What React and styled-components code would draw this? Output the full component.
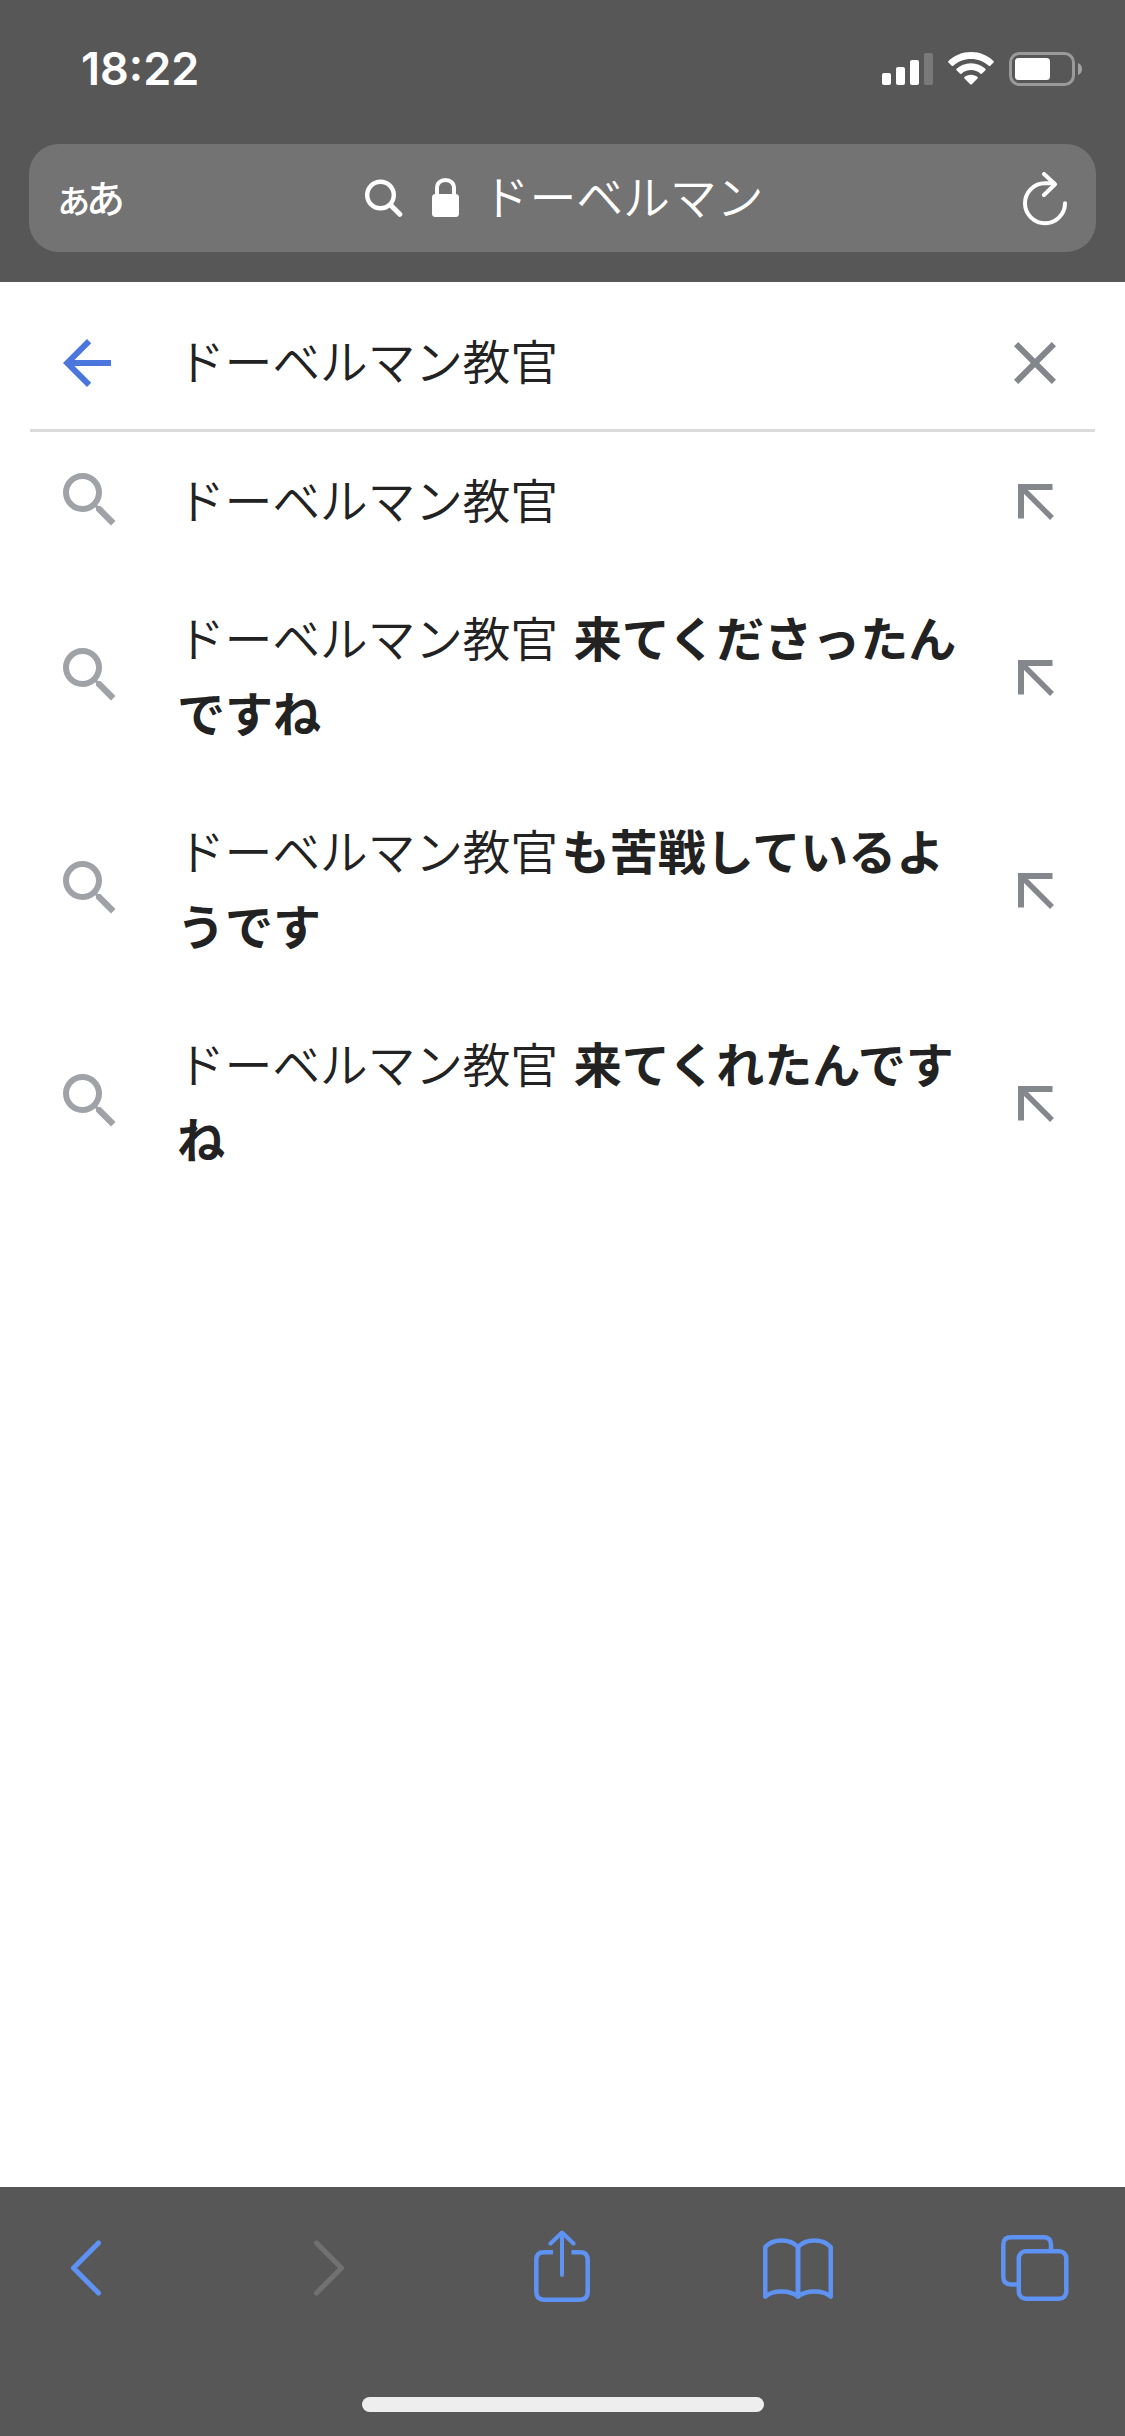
import React from "react";
import styled, { createGlobalStyle } from "styled-components";

const suggestions = [
  { typed: "ドーベルマン教官" },
  { typed: "ドーベルマン教官", rest: " 来てくださったん", wrapped: "ですね" },
  { typed: "ドーベルマン教官", rest: "も苦戦しているよ", wrapped: "うです" },
  { typed: "ドーベルマン教官", rest: " 来てくれたんです", wrapped: "ね" },
];

const App = () => (
  <Phone>
    <GlobalStyle />
    <TopChrome>
      <StatusBar>
        <Time>18:22</Time>
        <StatusIcons>
          <SignalIcon />
          <WifiIcon />
          <BatteryIcon />
        </StatusIcons>
      </StatusBar>
      <AddressBar>
        <ReaderLabel>ぁあ</ReaderLabel>
        <Address>
          <AddressSearchIcon />
          <LockIcon />
          <AddressText>ドーベルマン</AddressText>
        </Address>
        <ReloadIcon />
      </AddressBar>
    </TopChrome>
    <Page>
      <SearchHeader>
        <BackArrowIcon />
        <Query>ドーベルマン教官</Query>
        <ClearIcon />
      </SearchHeader>
      <List>
        {suggestions.map((item, i) => (
          <Row key={i}>
            <RowSearch>
              <RowSearchIcon />
            </RowSearch>
            <Suggestion>
              <div>
                <Typed>{item.typed}</Typed>
                {item.rest && <Rest>{item.rest}</Rest>}
              </div>
              {item.wrapped && (
                <div>
                  <Rest>{item.wrapped}</Rest>
                </div>
              )}
            </Suggestion>
            <RowFill>
              <FillArrowIcon />
            </RowFill>
          </Row>
        ))}
      </List>
    </Page>
    <BottomChrome>
      <Toolbar>
        <ToolButton>
          <ChevronIcon />
        </ToolButton>
        <ToolButton $nudge={12}>
          <ChevronIcon forward />
        </ToolButton>
        <ToolButton $nudge={2}>
          <ShareIcon />
        </ToolButton>
        <ToolButton>
          <BookIcon />
        </ToolButton>
        <ToolButton>
          <TabsIcon />
        </ToolButton>
      </Toolbar>
      <HomeIndicator />
    </BottomChrome>
  </Phone>
);

const SignalIcon = () => (
  <svg width="51" height="34" viewBox="0 0 51 34" fill="#fff">
    <rect x="0" y="21" width="9" height="12" rx="2" />
    <rect x="14" y="15" width="9" height="18" rx="2" />
    <rect x="28" y="8" width="9" height="25" rx="2" />
    <rect x="42" y="1" width="9" height="32" rx="2" fill="#797979" />
  </svg>
);

const WifiIcon = () => (
  <svg width="46" height="34" viewBox="0 0 46 34" fill="#fff">
    <path d="M23 0C31.800 0 39.800 3.400 45.500 8.900Q46.300 9.700 45.500 10.500L42.300 13.700Q41.500 14.500 40.700 13.700C36 9.400 29.800 6.900 23 6.900S10 9.400 5.300 13.700Q4.500 14.500 3.700 13.700L.5 10.500Q-.3 9.700 .5 8.900C6.200 3.400 14.200 0 23 0Z" />
    <path d="M23 11.200C28.600 11.200 33.600 13.300 37.400 16.700Q38.200 17.500 37.400 18.300L34.100 21.600Q33.300 22.400 32.500 21.700C29.900 19.500 26.600 18.100 23 18.100S16.100 19.500 13.500 21.700Q12.700 22.400 11.900 21.600L8.600 18.300Q7.800 17.500 8.600 16.700C12.400 13.300 17.400 11.200 23 11.200Z" />
    <path d="M23 22.800C25.500 22.800 27.800 23.700 29.500 25.100Q30.200 25.800 29.500 26.500L23.800 32.300Q23 33.100 22.200 32.300L16.500 26.500Q15.800 25.800 16.500 25.100C18.200 23.700 20.500 22.800 23 22.800Z" />
  </svg>
);

const BatteryIcon = () => (
  <svg width="74" height="34" viewBox="0 0 74 34">
    <rect
      x="1.500"
      y="1.500"
      width="63"
      height="31"
      rx="9"
      fill="none"
      stroke="#9a9a9a"
      strokeWidth="3"
    />
    <rect x="6" y="6" width="35" height="22" rx="3.500" fill="#fff" />
    <path d="M69 11C71.700 12 73 14.300 73 17S71.700 22 69 23Z" fill="#a2a2a2" />
  </svg>
);

const AddressSearchIcon = () => (
  <svg
    width="38"
    height="40"
    viewBox="0 0 38 40"
    fill="none"
    stroke="#fff"
    strokeLinecap="round"
  >
    <circle cx="15.500" cy="17" r="13.300" strokeWidth="4.400" />
    <path d="M26 27.500L34.800 36.300" strokeWidth="5" />
  </svg>
);

const LockIcon = () => (
  <svg width="27" height="40" viewBox="0 0 27 40">
    <rect y="16" width="27" height="23" rx="3.500" fill="#fff" />
    <path
      d="M5 18V10.500C5 5 8.500 2 13.500 2S22 5 22 10.500V18"
      fill="none"
      stroke="#fff"
      strokeWidth="4"
    />
  </svg>
);

const ReloadIcon = () => (
  <svg
    width="45"
    height="54"
    viewBox="0 0 45 54"
    fill="none"
    stroke="#fff"
    strokeWidth="4"
    strokeLinecap="round"
    strokeLinejoin="round"
  >
    <path d="M42 31.300A20 20 0 1 1 22 11.300H31" />
    <path d="M21 2L32 12.300L21 23" />
  </svg>
);

const BackArrowIcon = () => (
  <svg width="72" height="72" viewBox="0 0 24 24" fill="#4b76dd">
    <path d="M20 11H7.830l5.590-5.590L12 4l-8 8 8 8 1.410-1.410L7.830 13H20v-2z" />
  </svg>
);

const ClearIcon = () => (
  <svg width="72" height="72" viewBox="0 0 24 24" fill="#83868b">
    <path d="M19 6.410L17.590 5 12 10.590 6.410 5 5 6.410 10.590 12 5 17.590 6.410 19 12 13.410 17.590 19 19 17.590 13.410 12z" />
  </svg>
);

const RowSearchIcon = () => (
  <svg width="72" height="72" viewBox="0 0 24 24" fill="#9fa2a7">
    <path d="M15.500 14h-.790l-.280-.270A6.471 6.471 0 0 0 16 9.500 6.500 6.500 0 1 0 9.500 16c1.610 0 3.090-.590 4.230-1.570l.270.280v.790l5 4.990L20.490 19l-4.990-5zm-6 0C7.010 14 5 11.990 5 9.500S7.010 5 9.500 5 14 7.010 14 9.500 11.990 14 9.500 14z" />
  </svg>
);

const FillArrowIcon = () => (
  <svg
    width="36"
    height="36"
    viewBox="0 0 36 36"
    fill="none"
    stroke="#84878c"
    strokeWidth="6"
  >
    <path d="M34.500 3H3V34.500" />
    <path d="M4 4L34 34" strokeWidth="5.400" />
  </svg>
);

const ChevronIcon = ({ forward }) => (
  <svg
    width="30"
    height="72"
    viewBox="0 0 30 72"
    fill="none"
    stroke={forward ? "#717171" : "#5e92f3"}
    strokeWidth="5"
    strokeLinecap="round"
    strokeLinejoin="round"
  >
    <path
      d={forward ? "M2.500 13L27.500 38L2.500 63" : "M27.500 13L2.500 38L27.500 63"}
    />
  </svg>
);

const ShareIcon = () => (
  <svg
    width="56"
    height="72"
    viewBox="0 0 56 72"
    fill="none"
    stroke="#5e92f3"
    strokeWidth="4.500"
    strokeLinejoin="round"
  >
    <path d="M19 22.300H10Q2.300 22.300 2.300 30V62Q2.300 69.700 10 69.700H46Q53.700 69.700 53.700 62V30Q53.700 22.300 46 22.300H37.500" />
    <path
      d="M28 3V45M16.500 13.500L28 2.500L39.500 13.500"
      strokeLinecap="round"
      strokeWidth="4"
    />
  </svg>
);

const BookIcon = () => (
  <svg
    width="70"
    height="72"
    viewBox="0 0 70 72"
    fill="none"
    stroke="#5e92f3"
    strokeWidth="4.500"
    strokeLinejoin="round"
  >
    <path d="M2.300 17C10 8.200 27 8.200 35 17V66.500C27 59.800 10 59.800 2.300 66.500Z" />
    <path d="M67.700 17C60 8.200 43 8.200 35 17V66.500C43 59.800 60 59.800 67.700 66.500Z" />
  </svg>
);

const TabsIcon = () => (
  <svg
    width="68"
    height="72"
    viewBox="0 0 68 72"
    fill="none"
    stroke="#5e92f3"
    strokeWidth="4.500"
  >
    <rect x="17.800" y="21.300" width="47.500" height="47.500" rx="7" />
    <path d="M17 54.500H10Q2.300 54.500 2.300 46.800V14.800Q2.300 7.300 10 7.300H42.500Q50 7.300 50 14.800V20" />
  </svg>
);

const GlobalStyle = createGlobalStyle`
  * {
    box-sizing: border-box;
  }

  body {
    margin: 0;
    background: #fff;
    font-family: "Noto Sans CJK JP", sans-serif;
  }

  svg {
    display: block;
    flex-shrink: 0;
  }
`;

const Phone = styled.div`
  width: 1125px;
  height: 2436px;
  display: flex;
  flex-direction: column;
  background: #fff;
`;

const TopChrome = styled.header`
  height: 282px;
  padding: 0 29px;
  background: #575757;
`;

const StatusBar = styled.div`
  height: 144px;
  padding: 0 13px 6px 52px;
  display: flex;
  align-items: center;
  justify-content: space-between;
`;

const Time = styled.span`
  font: 600 45px/54px Inter, sans-serif;
  color: #fff;
`;

const StatusIcons = styled.div`
  display: flex;
  gap: 15px;
`;

const AddressBar = styled.div`
  height: 108px;
  padding: 0 28px 0 25px;
  display: grid;
  grid-template-columns: 123px 1fr 112px;
  align-items: center;
  border-radius: 30px;
  background: #737373;
  color: #fff;

  > svg {
    justify-self: end;
    margin-top: 1px;
  }
`;

const ReaderLabel = styled.span`
  margin-top: -4px;
  font-size: 39px;
  font-weight: 500;
  line-height: 54px;
  letter-spacing: -7px;
`;

const Address = styled.div`
  display: flex;
  align-items: center;
  justify-content: center;

  svg + svg {
    margin-left: 29px;
  }
`;

const AddressText = styled.span`
  margin: -6px 5px 0 24px;
  font-size: 47px;
  font-weight: 350;
  line-height: 60px;
  letter-spacing: -0.2px;
`;

const Page = styled.main`
  flex: 1;
`;

const SearchHeader = styled.div`
  height: 150px;
  margin: 0 30px;
  padding: 15px 24px 0 21px;
  display: flex;
  align-items: center;
  border-bottom: 3px solid #dadbdd;
`;

const Query = styled.div`
  flex: 1;
  margin: -7px 0 0 54px;
  font-size: 48px;
  font-weight: 350;
  line-height: 75px;
  letter-spacing: -0.4px;
  color: #222;
`;

const List = styled.ul`
  margin: 0;
  padding: 0;
  list-style: none;
`;

const Row = styled.li`
  padding: 29px 71px 34px 54px;
  display: flex;
  align-items: center;
`;

const RowSearch = styled.div`
  margin-top: 2px;
`;

const RowFill = styled.div`
  margin-top: 7px;
`;

const Suggestion = styled.div`
  flex: 1;
  margin: 0 49px 0 51px;
  font-size: 48px;
  line-height: 75px;
  white-space: pre;
  color: #222;
`;

const Typed = styled.span`
  margin-right: 4px;
  font-weight: 350;
  letter-spacing: -0.4px;
`;

const Rest = styled.b`
  font-weight: 700;
  word-spacing: 1px;
`;

const BottomChrome = styled.footer`
  height: 249px;
  padding: 43px 0 24px;
  display: flex;
  flex-direction: column;
  align-items: center;
  justify-content: space-between;
  background: #575757;
`;

const Toolbar = styled.nav`
  width: 100%;
  padding: 0 50px 0 46px;
  display: flex;
  justify-content: space-between;
`;

const ToolButton = styled.div`
  width: 80px;
  padding-left: ${({ $nudge }) => $nudge || 0}px;
  display: flex;
  justify-content: center;
`;

const HomeIndicator = styled.div`
  width: 402px;
  height: 15px;
  border-radius: 8px;
  background: #eee;
`;

export default App;
